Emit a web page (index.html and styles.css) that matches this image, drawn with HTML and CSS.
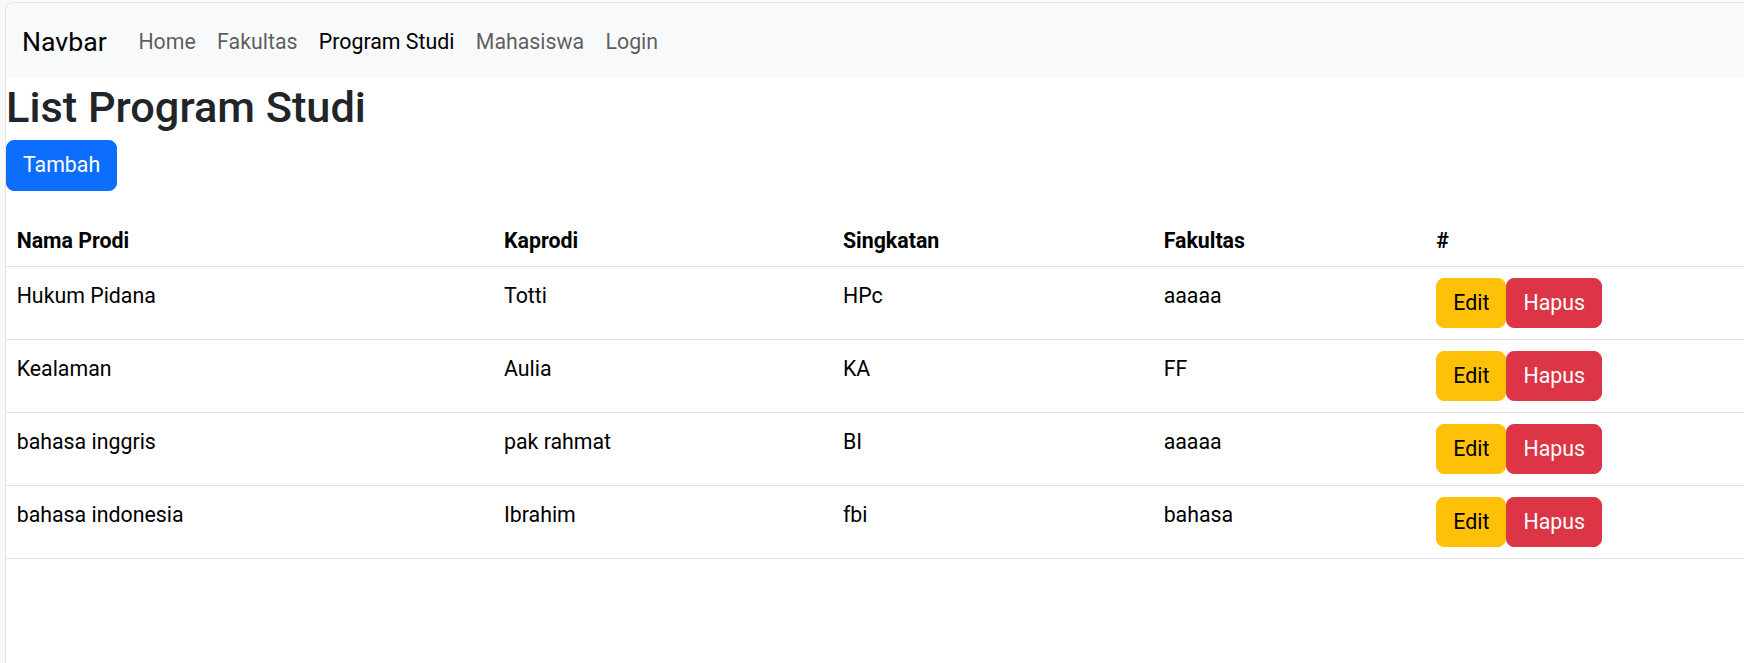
FILE: index.html
```html
<!DOCTYPE html>
<html lang="id">
<head>
<meta charset="utf-8">
<title>List Program Studi</title>
<link rel="stylesheet" href="styles.css">
</head>
<body>
<div class="viewport">
  <nav class="navbar">
    <a class="navbar-brand" href="#">Navbar</a>
    <ul class="navbar-nav">
      <li><a class="nav-link" href="#">Home</a></li>
      <li><a class="nav-link" href="#">Fakultas</a></li>
      <li><a class="nav-link active" href="#">Program Studi</a></li>
      <li><a class="nav-link" href="#">Mahasiswa</a></li>
      <li><a class="nav-link" href="#">Login</a></li>
    </ul>
  </nav>
  <h1 class="page-title">List Program Studi</h1>
  <div class="actions">
    <a class="btn btn-primary" href="#">Tambah</a>
  </div>
  <table class="table">
    <colgroup>
      <col class="col-nama">
      <col class="col-kaprodi">
      <col class="col-singkatan">
      <col class="col-fakultas">
      <col class="col-aksi">
    </colgroup>
    <thead>
      <tr>
        <th>Nama Prodi</th>
        <th>Kaprodi</th>
        <th>Singkatan</th>
        <th>Fakultas</th>
        <th>#</th>
      </tr>
    </thead>
    <tbody>
      <tr>
        <td>Hukum Pidana</td>
        <td>Totti</td>
        <td>HPc</td>
        <td>aaaaa</td>
        <td><div class="btn-group"><a class="btn btn-warning" href="#">Edit</a><button class="btn btn-danger" type="button">Hapus</button></div></td>
      </tr>
      <tr>
        <td>Kealaman</td>
        <td>Aulia</td>
        <td>KA</td>
        <td>FF</td>
        <td><div class="btn-group"><a class="btn btn-warning" href="#">Edit</a><button class="btn btn-danger" type="button">Hapus</button></div></td>
      </tr>
      <tr>
        <td>bahasa inggris</td>
        <td>pak rahmat</td>
        <td>BI</td>
        <td>aaaaa</td>
        <td><div class="btn-group"><a class="btn btn-warning" href="#">Edit</a><button class="btn btn-danger" type="button">Hapus</button></div></td>
      </tr>
      <tr>
        <td>bahasa indonesia</td>
        <td>Ibrahim</td>
        <td>fbi</td>
        <td>bahasa</td>
        <td><div class="btn-group"><a class="btn btn-warning" href="#">Edit</a><button class="btn btn-danger" type="button">Hapus</button></div></td>
      </tr>
    </tbody>
  </table>
</div>
</body>
</html>
```

FILE: styles.css
```css
* {
  box-sizing: border-box;
}

html, body {
  margin: 0;
  padding: 0;
}

body {
  background: #f9f9f9;
  font-family: Roboto, "Noto Sans", "Liberation Sans", sans-serif;
  font-size: 21.333px;
  line-height: 1.5;
  color: #212529;
}

.viewport {
  margin: 2px 0 0 5px;
  min-height: calc(100vh - 2px);
  background: #ffffff;
  border-top: 1px solid #e4e4e4;
  border-left: 1px solid #e4e4e4;
  border-top-left-radius: 8px;
  overflow: hidden;
}

/* Navbar */
.navbar {
  display: flex;
  align-items: center;
  height: 75px;
  padding: 12.5px 16px 9.5px;
  background: #f8f9fa;
}

.navbar-brand {
  font-size: 26.667px;
  line-height: 40px;
  padding: 6.667px 0;
  margin-right: 21px;
  color: #000;
  text-decoration: none;
}

.navbar-nav {
  display: flex;
  list-style: none;
  margin: 0;
  padding: 0;
}

.nav-link {
  display: block;
  padding: 10.667px 10.667px;
  font-size: 21.333px;
  line-height: 32px;
  color: rgba(0, 0, 0, 0.65);
  text-decoration: none;
}

.nav-link.active {
  color: #000;
}

/* Heading */
.page-title {
  margin: 0 0 7px;
  padding-top: 3.5px;
  font-size: 43.3px;
  font-weight: 500;
  line-height: 51.2px;
  color: #212529;
}

.actions {
  margin-bottom: 20.8px;
}

/* Buttons */
.btn {
  display: inline-block;
  padding: 8px 16px;
  font-family: inherit;
  font-size: 21.333px;
  line-height: 32px;
  font-weight: 400;
  text-align: center;
  text-decoration: none;
  border: 1px solid transparent;
  border-radius: 8px;
  cursor: pointer;
  vertical-align: middle;
}

.btn-primary {
  color: #fff;
  background: #0d6efd;
  border-color: #0d6efd;
  padding-top: 8.5px;
  padding-bottom: 8.5px;
}

.btn-warning {
  color: #000;
  background: #ffc107;
  border-color: #ffc107;
}

.btn-danger {
  color: #fff;
  background: #dc3545;
  border-color: #dc3545;
}

.btn-group {
  display: flex;
}

/* Table */
.table {
  width: 100%;
  border-collapse: collapse;
  table-layout: fixed;
  color: #000;
  margin-bottom: 21.333px;
}

.col-nama { width: 487.3px; }
.col-kaprodi { width: 339px; }
.col-singkatan { width: 320.7px; }
.col-fakultas { width: 272.7px; }
.col-aksi { width: auto; }

.table th,
.table td {
  padding: 11.1px 10.667px;
  text-align: left;
  vertical-align: top;
  border-bottom: 1px solid #dee2e6;
}

.table th {
  font-weight: 700;
  line-height: 32px;
  padding-top: 13.1px;
  padding-bottom: 9.1px;
}

.table td {
  line-height: 36px;
}
```
